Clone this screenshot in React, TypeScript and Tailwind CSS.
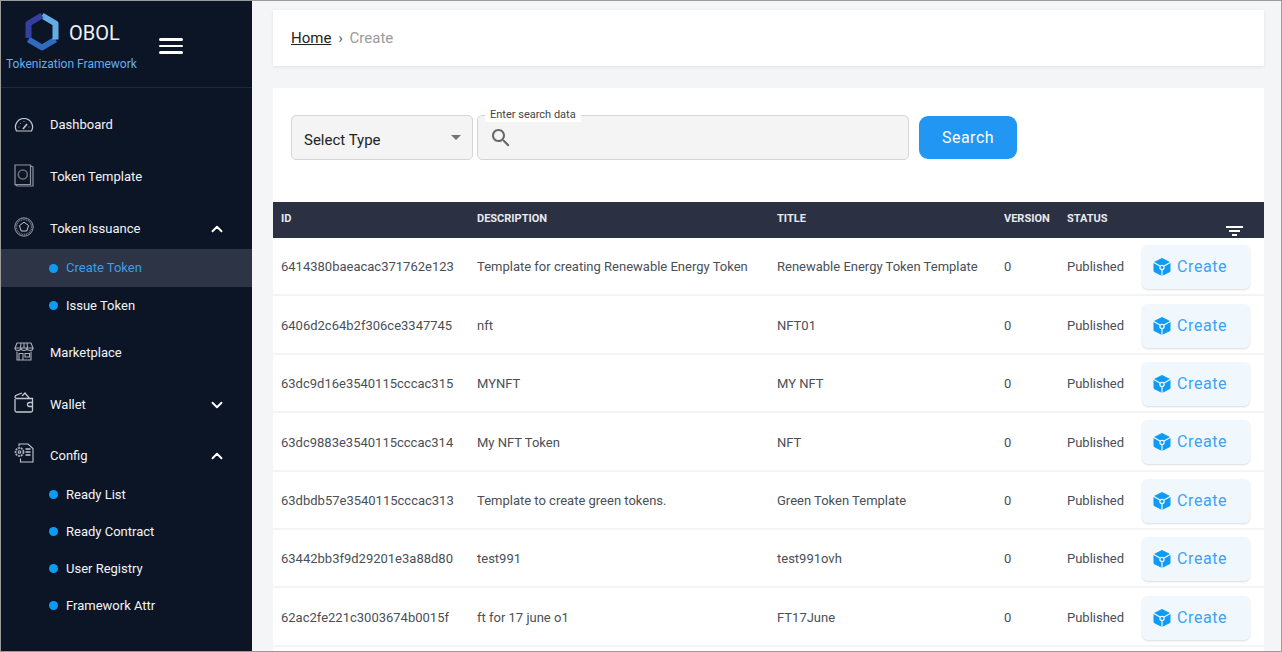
import { ReactNode } from 'react';
import { ChevronDown, ChevronUp } from 'lucide-react';

const rows = [
  { id: '6414380baeacac371762e123', description: 'Template for creating Renewable Energy Token', title: 'Renewable Energy Token Template' },
  { id: '6406d2c64b2f306ce3347745', description: 'nft', title: 'NFT01' },
  { id: '63dc9d16e3540115cccac315', description: 'MYNFT', title: 'MY NFT' },
  { id: '63dc9883e3540115cccac314', description: 'My NFT Token', title: 'NFT' },
  { id: '63dbdb57e3540115cccac313', description: 'Template to create green tokens.', title: 'Green Token Template' },
  { id: '63442bb3f9d29201e3a88d80', description: 'test991', title: 'test991ovh' },
  { id: '62ac2fe221c3003674b0015f', description: 'ft for 17 june o1', title: 'FT17June' },
];

function Logo() {
  return (
    <svg width="34" height="39" viewBox="0 0 34 39" fill="none" strokeWidth="6" strokeLinejoin="round">
      <path d="M30.5 27.5 L17 35.5 L3.5 27.5" stroke="#2f6cc0" />
      <path d="M17 3.5 L30.5 11.5 L30.5 27.5" stroke="#63ade6" />
      <path d="M3.5 26 L3.5 11.5 L17 3.5" stroke="#343f9f" />
    </svg>
  );
}

function GaugeIcon() {
  return (
    <svg width="20" height="14" viewBox="0 0 20 14" fill="none" stroke="#c3c7ce" strokeWidth="1.2">
      <path d="M2.5 13 H17.5 A8.5 8.5 0 1 0 2.5 13 Z" />
      <path d="M9 11 L13 6" strokeWidth="1.6" />
      <path d="M4.5 9 h1 M6 5 l.8.8 M10 3 v1 M14.5 9 h1" strokeWidth="0.8" />
    </svg>
  );
}

function BookIcon() {
  return (
    <svg width="20" height="23" viewBox="0 0 20 23" fill="none" stroke="#8f949e" strokeWidth="1.2">
      <path d="M1 1 H16.5 V20.5 H1 Z" />
      <path d="M16.5 2 L19 3 V22 H3 L1 20.5" />
      <circle cx="8.8" cy="10.5" r="4.5" strokeWidth="1.6" stroke="#666d79" />
    </svg>
  );
}

function BadgeIcon() {
  return (
    <svg width="20" height="20" viewBox="0 0 20 20" fill="none" stroke="#9aa0aa" strokeWidth="1">
      <circle cx="10" cy="10" r="9.2" />
      <circle cx="10" cy="10" r="7.6" strokeDasharray="1 .8" strokeWidth="1.6" stroke="#747b87" />
      <path d="M10 5.2 L14.6 8.6 L12.8 14 H7.2 L5.4 8.6 Z" stroke="#c3c7ce" />
    </svg>
  );
}

function StoreIcon() {
  return (
    <svg width="20" height="19" viewBox="0 0 20 19" fill="none" stroke="#a9aeb7" strokeWidth="1.1">
      <path d="M3 1 H17 L19 6 H1 Z" />
      <path d="M1 6 a3 2.5 0 0 0 6 0 a3 2.5 0 0 0 6 0 a3 2.5 0 0 0 6 0" />
      <path d="M7 1 L6.5 6 M13 1 L13.5 6 M10 1 V6" />
      <path d="M3 9.5 V18 H17 V9.5" />
      <path d="M5 18 V11.5 H9 V18 M11 11.5 H15.5 V15 H11 Z" />
    </svg>
  );
}

function WalletIcon() {
  return (
    <svg width="20" height="21" viewBox="0 0 20 21" fill="none" stroke="#c3c7ce" strokeWidth="1.3">
      <path d="M1 7 V18.5 a1.5 1.5 0 0 0 1.5 1.5 H17 a1.5 1.5 0 0 0 1.5-1.5 V6.5 H3 a1.8 1.8 0 0 1-2-1.8 a2 2 0 0 1 1.5-1.5 L8 1 M8 4 L11 1 L15.5 6.5" />
      <path d="M18.5 10.5 H15.5 a2 2 0 0 0 0 4 H18.5" />
    </svg>
  );
}

function ConfigIcon() {
  return (
    <svg width="20" height="20" viewBox="0 0 20 20" fill="none" stroke="#c3c7ce" strokeWidth="1.1">
      <path d="M5 3.5 V1 H14 L19 5.5 V19 H6.5 V15.5" />
      <circle cx="5.5" cy="9" r="4" strokeDasharray="2 .8" strokeWidth="1.8" stroke="#a9aeb7" />
      <circle cx="5.5" cy="9" r="1.3" />
      <path d="M11.5 6 H16.5 M11.5 9 H16.5 M11.5 12 H16.5" strokeWidth="1.3" />
    </svg>
  );
}

function CubeIcon() {
  return (
    <svg width="18" height="18" viewBox="0 0 18 18" className="shrink-0">
      <path d="M9 .5 L17 4.5 V13.5 L9 17.5 L1 13.5 V4.5 Z" fill="#0f9bf5" stroke="#0f9bf5" strokeLinejoin="round" />
      <path d="M0 4 L7 8 M18 4 L11 8 M9 12 V18" fill="none" stroke="#f0f8fe" strokeWidth="1.2" />
      <circle cx="9" cy="9.5" r="2.7" fill="#f0f8fe" />
      <circle cx="9" cy="9.5" r="1.4" fill="#0f9bf5" />
    </svg>
  );
}

function NavItem({ icon, label, h, open, iconClass }: { icon: ReactNode; label: string; h: string; open?: boolean; iconClass?: string }) {
  return (
    <div className={`flex items-center ${h}`}>
      <div className="w-[49px] flex justify-center pr-[4px] shrink-0">
        <div className={`flex ${iconClass ?? ''}`}>{icon}</div>
      </div>
      <span className="text-[13px] text-[#f2f4f7] flex-1">{label}</span>
      {open !== undefined &&
        (open ? (
          <ChevronUp className="w-[18px] h-[18px] text-white mr-[26px]" strokeWidth={2.5} />
        ) : (
          <ChevronDown className="w-[18px] h-[18px] text-white mr-[26px]" strokeWidth={2.5} />
        ))}
    </div>
  );
}

function SubItem({ label, active, h }: { label: string; active?: boolean; h: string }) {
  return (
    <div className={`flex items-center ${h} pl-[48px] ${active ? 'bg-[#2d3446]' : ''}`}>
      <span className="w-[9px] h-[9px] rounded-full bg-[#0d9bf8] mr-[8px]" />
      <span className={`text-[13px] ${active ? 'text-[#3c9fe8]' : 'text-[#f2f4f7]'}`}>{label}</span>
    </div>
  );
}

function Sidebar() {
  return (
    <aside className="w-[251px] shrink-0 bg-[#0c1526] h-full">
      <div className="relative h-[87px] border-b border-[#1d2a3a]">
        <div className="absolute left-[24px] top-[11px]">
          <Logo />
        </div>
        <span className="absolute left-[68px] top-[17px] text-[20px] leading-[30px] text-[#f0f2f5]">OBOL</span>
        <span className="absolute left-[5px] top-[54px] text-[12px] leading-[18px] text-[#62aef0]">Tokenization Framework</span>
        <div className="absolute left-[158px] top-[37px] flex flex-col gap-[4px]">
          <span className="block w-[24px] h-[2.5px] bg-white rounded-sm" />
          <span className="block w-[24px] h-[2.5px] bg-white rounded-sm" />
          <span className="block w-[24px] h-[2.5px] bg-white rounded-sm" />
        </div>
      </div>
      <div className="pt-[11px]">
        <NavItem icon={<GaugeIcon />} label="Dashboard" h="h-[52px]" />
        <NavItem icon={<BookIcon />} iconClass="mb-[4px]" label="Token Template" h="h-[52px]" />
        <NavItem icon={<BadgeIcon />} iconClass="mb-[4px]" label="Token Issuance" h="h-[46px] pt-[6px]" open />
        <SubItem label="Create Token" active h="h-[38px]" />
        <SubItem label="Issue Token" h="h-[37px]" />
        <NavItem icon={<StoreIcon />} iconClass="mb-[4px]" label="Marketplace" h="h-[58px]" />
        <NavItem icon={<WalletIcon />} iconClass="mb-[4px]" label="Wallet" h="h-[45px]" open={false} />
        <NavItem icon={<ConfigIcon />} iconClass="mb-[5px]" label="Config" h="h-[49px] pt-[8px]" open />
        <SubItem label="Ready List" h="h-[37px]" />
        <SubItem label="Ready Contract" h="h-[37px]" />
        <SubItem label="User Registry" h="h-[37px]" />
        <SubItem label="Framework Attr" h="h-[37px]" />
      </div>
    </aside>
  );
}

function TableRow({ id, description, title }: { id: string; description: string; title: string }) {
  return (
    <div className="flex items-center h-[58.4px] shadow-[inset_0_-2px_0_#f3f4f6] text-[13px] text-[#4a4f57]">
      <span className="w-[204px] pl-[8px]">{id}</span>
      <span className="w-[300px]">{description}</span>
      <span className="w-[227px]">{title}</span>
      <span className="w-[63px]">0</span>
      <span className="w-[75px]">Published</span>
      <button className="flex items-center w-[108px] h-[44px] pl-[11px] rounded-md bg-[#f0f8fe] shadow-[0_1px_2px_rgba(0,0,0,0.14)] text-[16px] tracking-[0.6px] text-[#3da2f4]">
        <CubeIcon />
        <span className="ml-[6px]">Create</span>
      </button>
    </div>
  );
}

export default function App() {
  return (
    <div
      className="w-[1282px] h-[652px] overflow-hidden flex bg-[#f4f5f7] border border-[#9a9a9a]"
      style={{ fontFamily: 'Roboto, sans-serif' }}
    >
      <Sidebar />
      <main className="flex-1 pl-[21px] pr-[17px] pt-[9px]">
        {/* Breadcrumb */}
        <div className="flex items-center h-[56px] px-[18px] bg-white shadow-[0_1px_3px_rgba(0,0,0,0.08)] text-[15px]">
          <span className="text-[#222] underline">Home</span>
          <span className="mx-[7px] text-[#555] text-[14px]">›</span>
          <span className="text-[#9b9b9b]">Create</span>
        </div>

        {/* Search + table */}
        <div className="mt-[22px] h-[600px] bg-white">
          <div className="flex items-start h-[114px] pl-[18px] pt-[27px]">
            <div className="flex items-center justify-between w-[182px] h-[45px] pl-[12px] pr-[11px] bg-[#f4f4f4] border border-[#d5d5d5] rounded-[5px]">
              <span className="text-[15px] text-[#222] pt-[5px]">Select Type</span>
              <span className="w-0 h-0 border-x-[5px] border-x-transparent border-t-[5px] border-t-[#757575]" />
            </div>
            <div className="relative ml-[4px] flex items-center w-[432px] h-[45px] pl-[11px] bg-[#f4f4f4] border border-[#d5d5d5] rounded-[5px]">
              <span className="absolute left-[7px] top-[-8px] px-[5px] bg-white text-[11px] leading-[14px] text-[#444]">Enter search data</span>
              <svg width="24" height="24" viewBox="0 0 24 24" fill="#666">
                <path d="M15.5 14h-.79l-.28-.27C15.41 12.59 16 11.11 16 9.5 16 5.91 13.09 3 9.5 3S3 5.91 3 9.5 5.91 16 9.5 16c1.61 0 3.09-.59 4.23-1.57l.27.28v.79l5 4.99L20.49 19l-4.99-5zm-6 0C7.01 14 5 11.99 5 9.5S7.01 5 9.5 5 14 7.01 14 9.5 11.99 14 9.5 14z" />
              </svg>
            </div>
            <button className="ml-[10px] mt-[1px] w-[98px] h-[43px] rounded-[9px] bg-[#2196f3] text-white text-[16px] tracking-[0.5px]">Search</button>
          </div>

          <div className="flex items-center h-[36px] pb-[2px] bg-[#2b3143] text-[11px] font-bold text-[#e8eaee] relative">
            <span className="w-[204px] pl-[8px]">ID</span>
            <span className="w-[300px]">DESCRIPTION</span>
            <span className="w-[227px]">TITLE</span>
            <span className="w-[63px]">VERSION</span>
            <span className="w-[75px]">STATUS</span>
            <div className="absolute right-[21px] bottom-[2px] flex flex-col items-center gap-[2px]">
              <span className="block w-[17px] h-[2px] bg-white" />
              <span className="block w-[11px] h-[2px] bg-white" />
              <span className="block w-[5px] h-[2px] bg-white" />
            </div>
          </div>

          {rows.map((row) => (
            <TableRow key={row.id} {...row} />
          ))}
        </div>
      </main>
    </div>
  );
}
